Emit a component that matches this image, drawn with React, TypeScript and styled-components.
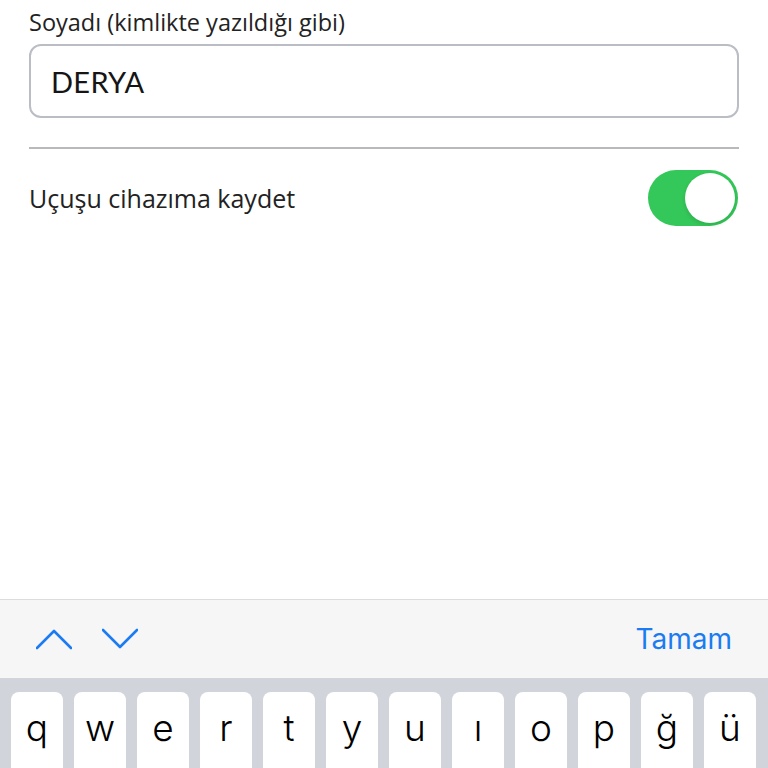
import styled, { createGlobalStyle } from "styled-components";

const GlobalStyle = createGlobalStyle`
  html, body {
    margin: 0;
    padding: 0;
    background: #ffffff;
  }
  * {
    box-sizing: border-box;
  }
`;

const Screen = styled.div`
  width: 768px;
  height: 768px;
  display: flex;
  flex-direction: column;
  overflow: hidden;
  font-family: "Open Sans", Lato, sans-serif;
  color: #1c1c1e;
`;

const Form = styled.div`
  flex: 1;
  padding: 7px 29px 0 29px;
  display: flex;
  flex-direction: column;
`;

const Label = styled.div`
  font-size: 23.5px;
  line-height: 30px;
  color: #222;
`;

const TextBox = styled.div`
  margin-top: 7px;
  height: 74px;
  border: 2px solid #babec4;
  border-radius: 12px;
  padding: 0 20px;
  display: flex;
  align-items: center;
  font-family: Lato, "Open Sans", sans-serif;
  font-size: 29px;
  color: #151515;
  letter-spacing: 0.3px;
`;

const Divider = styled.div`
  margin-top: 29px;
  height: 2px;
  background: #b7b9bc;
`;

const SwitchRow = styled.div`
  margin-top: 21px;
  display: flex;
  align-items: center;
  justify-content: space-between;
`;

const RowText = styled.div`
  font-size: 25px;
  color: #222;
`;

const Switch = styled.div<{ $on: boolean }>`
  position: relative;
  width: 90px;
  height: 56px;
  border-radius: 28px;
  background: ${(p) => (p.$on ? "#34c759" : "#e5e5ea")};
  margin-right: 1px;
`;

const Knob = styled.div<{ $on: boolean }>`
  position: absolute;
  top: 3px;
  left: ${(p) => (p.$on ? "37px" : "3px")};
  width: 50px;
  height: 50px;
  border-radius: 50%;
  background: #fff;
  box-shadow: 0 2px 4px rgba(0, 0, 0, 0.12);
`;

const Accessory = styled.div`
  height: 79px;
  border-top: 1px solid #dcdcde;
  background: #f6f6f7;
  display: flex;
  align-items: center;
  padding: 0 36px 0 36px;
  font-family: Inter, Roboto, sans-serif;
`;

const Arrows = styled.div`
  display: flex;
  gap: 30px;
  flex: 1;
`;

const Done = styled.div`
  font-size: 28px;
  color: #1a7cf0;
`;

const Keyboard = styled.div`
  background: #d1d4da;
  padding: 14px 11px 0 11px;
  height: 90px;
  display: grid;
  grid-template-columns: repeat(12, 52px);
  column-gap: 11px;
  font-family: Inter, Roboto, sans-serif;
`;

const Key = styled.div`
  height: 90px;
  background: #fff;
  border-radius: 8px;
  display: flex;
  justify-content: center;
  padding-top: 13px;
  font-size: 37px;
  font-weight: 300;
  color: #000;
`;

const Chevron = ({ up }: { up?: boolean }) => (
  <svg width="36" height="22" viewBox="0 0 36 22">
    <path
      d={up ? "M1 20 L18 3 L35 20" : "M1 2 L18 19 L35 2"}
      fill="none"
      stroke="#1a7cf0"
      strokeWidth="2.6"
      strokeLinecap="round"
      strokeLinejoin="round"
    />
  </svg>
);

const keys = ["q", "w", "e", "r", "t", "y", "u", "ı", "o", "p", "ğ", "ü"];

export default function App() {
  return (
    <Screen>
      <GlobalStyle />
      <Form>
        <Label>Soyadı (kimlikte yazıldığı gibi)</Label>
        <TextBox>DERYA</TextBox>
        <Divider />
        <SwitchRow>
          <RowText>Uçuşu cihazıma kaydet</RowText>
          <Switch $on>
            <Knob $on />
          </Switch>
        </SwitchRow>
      </Form>
      <Accessory>
        <Arrows>
          <Chevron up />
          <Chevron />
        </Arrows>
        <Done>Tamam</Done>
      </Accessory>
      <Keyboard>
        {keys.map((k) => (
          <Key key={k}>{k}</Key>
        ))}
      </Keyboard>
    </Screen>
  );
}
